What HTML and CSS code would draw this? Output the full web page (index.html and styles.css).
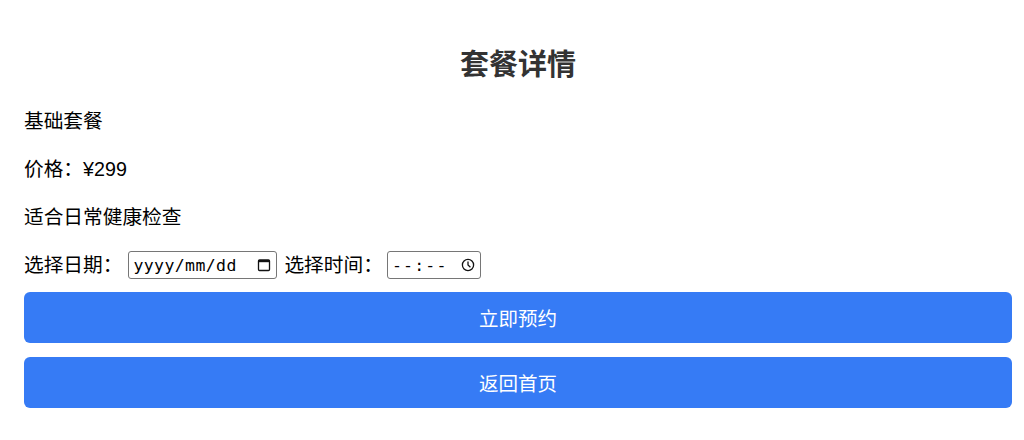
FILE: index.html
```html
<!DOCTYPE html>
<html lang="zh-CN">
<head>
<meta charset="utf-8">
<title>套餐详情</title>
<link rel="stylesheet" href="styles.css">
</head>
<body>
<div class="page">
  <h1 class="title">套餐详情</h1>
  <p class="line">基础套餐</p>
  <p class="line">价格：¥299</p>
  <p class="line">适合日常健康检查</p>
  <div class="pick-row">
    <span class="label label-date">选择日期：</span>
    <span class="field field-date">
      <span class="field-text">yyyy/mm/dd</span>
      <svg class="icon" width="14" height="14" viewBox="0 0 14 14"><rect x="1.5" y="2" width="11" height="10.5" rx="1" fill="none" stroke="#111" stroke-width="1.3"/><rect x="1.5" y="2" width="11" height="2.2" fill="#111"/></svg>
    </span>
    <span class="label label-time">选择时间：</span>
    <span class="field field-time">
      <span class="field-text">--:--</span>
      <svg class="icon" width="14" height="14" viewBox="0 0 14 14"><circle cx="7" cy="7" r="5.6" fill="none" stroke="#111" stroke-width="1.3"/><path d="M7 3.6V7l2.4 2.2" fill="none" stroke="#111" stroke-width="1.3"/></svg>
    </span>
  </div>
  <div class="actions">
    <button class="btn">立即预约</button>
    <button class="btn">返回首页</button>
  </div>
</div>
</body>
</html>
```
FILE: styles.css
```css
html, body {
  margin: 0;
  padding: 0;
  background: #fff;
}
body {
  font-family: "Liberation Sans", "Noto Sans CJK SC", sans-serif;
  color: #000;
}
.page {
  padding: 42px 12px 0 24px;
}
.title {
  margin: 0 0 25px;
  font-family: "Noto Sans CJK SC", sans-serif;
  font-size: 29px;
  line-height: 40px;
  font-weight: 700;
  color: #333;
  text-align: center;
}
.line {
  margin: 0 0 20px;
  font-size: 19.7px;
  line-height: 28px;
}
.pick-row {
  display: flex;
  align-items: center;
  height: 28px;
  font-size: 19.7px;
}
.label {
  line-height: 28px;
  white-space: nowrap;
}
.label-date {
  margin-right: 6px;
}
.label-time {
  margin-right: 4px;
}
.field {
  box-sizing: border-box;
  height: 28px;
  border: 1px solid #767676;
  border-radius: 3px;
  display: inline-flex;
  align-items: center;
  justify-content: space-between;
  padding: 0 5px 0 4px;
  font-family: "DejaVu Sans Mono", "Liberation Mono", monospace;
  font-size: 16.5px;
  color: #000;
}
.field-date {
  width: 149px;
  margin-right: 7px;
  letter-spacing: 0.4px;
}
.field-time {
  width: 94px;
  letter-spacing: 1.2px;
}
.icon {
  display: block;
  flex: none;
}
.actions {
  margin-top: 13px;
  display: flex;
  flex-direction: column;
  gap: 14px;
}
.btn {
  height: 51px;
  border: none;
  border-radius: 6px;
  background: #367bf5;
  color: #fff;
  font-family: "Noto Sans CJK SC", sans-serif;
  font-size: 19.5px;
  cursor: pointer;
}
```
